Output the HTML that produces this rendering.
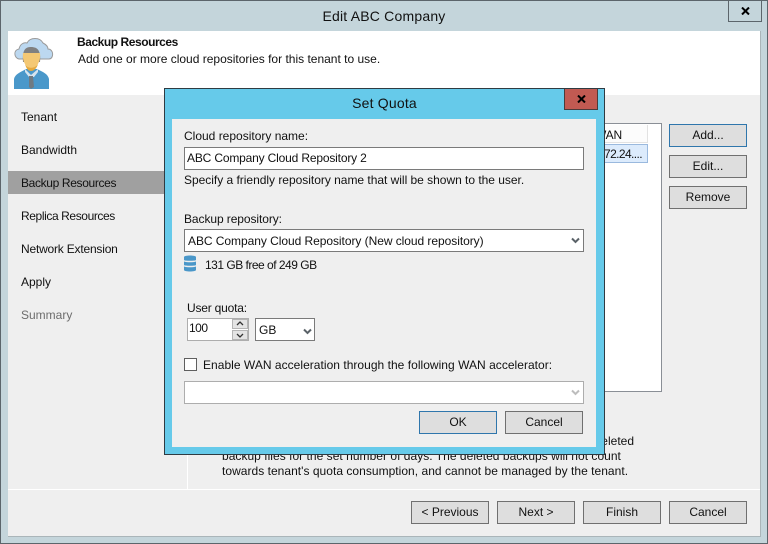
<!DOCTYPE html>
<html><head><meta charset="utf-8"><style>
html,body{margin:0;padding:0}
body{width:768px;height:544px;overflow:hidden;position:relative;background:#c4d5db;font-family:"Liberation Sans",sans-serif;font-size:12px;color:#111}
div,span,svg{position:absolute;box-sizing:border-box}
.t{white-space:nowrap;line-height:16px;height:16px}
.b{background:#dedede;border:1px solid #707070;text-align:center;line-height:20px;height:23px;width:78px;white-space:nowrap}
.f{background:#fff;border:1px solid #7a7a7a}
</style></head><body>
<div style="left:0;top:0;width:768px;height:544px;border:1px solid #5c656b"></div>
<div class="t" style="left:0;top:8px;width:768px;text-align:center;font-size:14px;line-height:16px;letter-spacing:.2px">Edit ABC Company</div>
<div style="left:728px;top:0;width:34px;height:22px;border:1px solid #5c656b"></div>
<svg style="left:741px;top:7px" width="9" height="8" viewBox="0 0 9 8"><path d="M1 .5 8 7.500M8 .5 1 7.500" stroke="#000" stroke-width="2" fill="none"/></svg>

<div style="left:8px;top:31px;width:753px;height:506px;background:#efefef;border-right:1px solid #aab5b9;border-bottom:1px solid #aab5b9"></div>
<div style="left:8px;top:31px;width:752px;height:64px;background:#fff"></div>
<svg style="left:13px;top:36px" width="42" height="54" viewBox="0 0 42 54">
<path d="M6 23C1 22 0 14 6 13 7 8 11 6 14 7 17 1 27 1 30 7 34 9 35 11 35 13 41 13 41 23 36 23Z" fill="#bcd8f0" stroke="#9a9a9a" stroke-width="1"/>
<path d="M10 26C9 13 13 11 18 11 25 11 28 15 27 26Z" fill="#808080"/>
<path d="M1 53V43C2 38 8 36 13 33H24C30 36 35 38 36 43V53Z" fill="#4a98ca"/>
<path d="M12 33 18 39 25 33 25 36 21 41H16L12 36Z" fill="#d5e3ee"/>
<path d="M16 40H20L21 51 18 53 16 51Z" fill="#6f7a82"/>
<path d="M10 17C14 17 24 17 27 17 28 25 24 32 18 33 13 32 9 25 10 17Z" fill="#f4c874"/>
<path d="M12 28C14 33 22 33 25 28 24 32 21 35 18 35 15 35 13 32 12 28Z" fill="#e5a93f"/>
</svg>
<div class="t" style="left:77px;top:34px;font-weight:bold;letter-spacing:-.45px">Backup Resources</div>
<div class="t" style="left:78px;top:51px">Add one or more cloud repositories for this tenant to use.</div>

<div style="left:8px;top:171px;width:156px;height:23px;background:#a0a0a0"></div>
<div class="t" style="left:21px;top:109px">Tenant</div>
<div class="t" style="left:21px;top:142px">Bandwidth</div>
<div class="t" style="left:21px;top:175px;letter-spacing:-.35px">Backup Resources</div>
<div class="t" style="left:21px;top:208px;letter-spacing:-.4px">Replica Resources</div>
<div class="t" style="left:21px;top:241px;letter-spacing:-.2px">Network Extension</div>
<div class="t" style="left:21px;top:274px">Apply</div>
<div class="t" style="left:21px;top:307px;color:#6d6d6d">Summary</div>

<div style="left:187px;top:454px;width:1px;height:35px;background:#fff"></div>
<div style="left:8px;top:489px;width:752px;height:1px;background:#fff"></div>

<div style="left:590px;top:123px;width:72px;height:269px;background:#fff;border:1px solid #8a8f96"></div>
<div style="left:600px;top:125px;width:48px;height:18px;background:#fcfcfc;border-right:1px solid #e2e2e2;border-bottom:1px solid #e2e2e2"></div>
<div class="t" style="left:595px;top:127px;letter-spacing:-.2px">WAN</div>
<div style="left:600px;top:144px;width:48px;height:19px;background:#dcebfc;border:1px solid #9ab9de;border-left:0"></div>
<div class="t" style="left:604px;top:146px;letter-spacing:-.6px">72.24....</div>

<div class="b" style="left:669px;top:124px;border-color:#2f76ac">Add...</div>
<div class="b" style="left:669px;top:155px">Edit...</div>
<div class="b" style="left:669px;top:186px">Remove</div>

<div class="t" style="left:222px;top:433px;width:412px;text-align:right">deleted</div>
<div class="t" style="left:222px;top:448px;letter-spacing:.03px">backup files for the set number of days. The deleted backups will not count</div>
<div class="t" style="left:222px;top:463px;letter-spacing:.03px">towards tenant's quota consumption, and cannot be managed by the tenant.</div>

<div class="b" style="left:411px;top:501px">&lt; Previous</div>
<div class="b" style="left:497px;top:501px">Next &gt;</div>
<div class="b" style="left:583px;top:501px">Finish</div>
<div class="b" style="left:669px;top:501px">Cancel</div>

<!-- Dialog -->
<div style="left:164px;top:88px;width:441px;height:367px;background:#66caea;border:1px solid #2f3b42"></div>
<div class="t" style="left:164px;top:95px;width:441px;text-align:center;font-size:14px;letter-spacing:.2px">Set Quota</div>
<div style="left:564px;top:89px;width:34px;height:21px;background:#c15a52;border:1px solid #4a3b3b;border-top:0"></div>
<svg style="left:577px;top:95px" width="9" height="8" viewBox="0 0 9 8"><path d="M1 .5 8 7.500M8 .5 1 7.500" stroke="#000" stroke-width="2" fill="none"/></svg>
<div style="left:172px;top:119px;width:424px;height:328px;background:#efefef"></div>

<div class="t" style="left:184px;top:128px">Cloud repository name:</div>
<div class="f" style="left:184px;top:147px;width:400px;height:23px"></div>
<div class="t" style="left:187px;top:150px;letter-spacing:-.17px">ABC Company Cloud Repository 2</div>
<div class="t" style="left:184px;top:172px;letter-spacing:-.02px">Specify a friendly repository name that will be shown to the user.</div>

<div class="t" style="left:184px;top:211px;letter-spacing:-.08px">Backup repository:</div>
<div class="f" style="left:184px;top:229px;width:400px;height:23px"></div>
<div class="t" style="left:188px;top:233px;letter-spacing:-.05px">ABC Company Cloud Repository (New cloud repository)</div>
<svg style="left:571px;top:237px" width="9" height="7" viewBox="0 0 9 7"><path d="M1 1.500 4.500 5 8 1.500" fill="none" stroke="#5a6268" stroke-width="2"/></svg>

<svg style="left:184px;top:255px" width="12" height="17" viewBox="0 0 12 17">
<path d="M0 2C0 0 12 0 12 2V5C12 6 0 6 0 5Z" fill="#4a97c9"/>
<path d="M0 6.500C3 7.500 9 7.500 12 6.500V10C12 11 0 11 0 10Z" fill="#4a97c9"/>
<path d="M0 11.500C3 12.500 9 12.500 12 11.500V15C12 17 0 17 0 15Z" fill="#4a97c9"/>
</svg>
<div class="t" style="left:205px;top:257px;letter-spacing:-.5px">131 GB free of 249 GB</div>

<div class="t" style="left:187px;top:300px;letter-spacing:-.2px">User quota:</div>
<div style="left:187px;top:318px;width:62px;height:23px;background:#fff;border:1px solid #adadad"></div>
<div class="t" style="left:189px;top:320px;letter-spacing:-.5px">100</div>
<div style="left:232px;top:319px;width:16px;height:10px;background:#e4e4e4;border:1px solid #b5b5b5"></div>
<div style="left:232px;top:330px;width:16px;height:10px;background:#e4e4e4;border:1px solid #b5b5b5"></div>
<svg style="left:232px;top:319px" width="16" height="21" viewBox="0 0 16 21"><path d="M5 6 8 3 11 6M5 15 8 18 11 15" fill="none" stroke="#333" stroke-width="1.300"/></svg>
<div class="f" style="left:255px;top:318px;width:60px;height:23px"></div>
<div class="t" style="left:259px;top:322px">GB</div>
<svg style="left:303px;top:328px" width="9" height="7" viewBox="0 0 9 7"><path d="M1 1.500 4.500 5 8 1.500" fill="none" stroke="#5a6268" stroke-width="2"/></svg>

<div style="left:184px;top:358px;width:13px;height:13px;background:#fff;border:1px solid #5f5f5f"></div>
<div class="t" style="left:203px;top:357px;letter-spacing:.03px">Enable WAN acceleration through the following WAN accelerator:</div>
<div style="left:184px;top:381px;width:400px;height:23px;background:#fff;border:1px solid #adadad"></div>
<svg style="left:571px;top:389px" width="9" height="7" viewBox="0 0 9 7"><path d="M1 1.500 4.500 5 8 1.500" fill="none" stroke="#bdbdbd" stroke-width="2"/></svg>

<div class="b" style="left:419px;top:411px;border-color:#2f76ac">OK</div>
<div class="b" style="left:505px;top:411px">Cancel</div>
</body></html>
